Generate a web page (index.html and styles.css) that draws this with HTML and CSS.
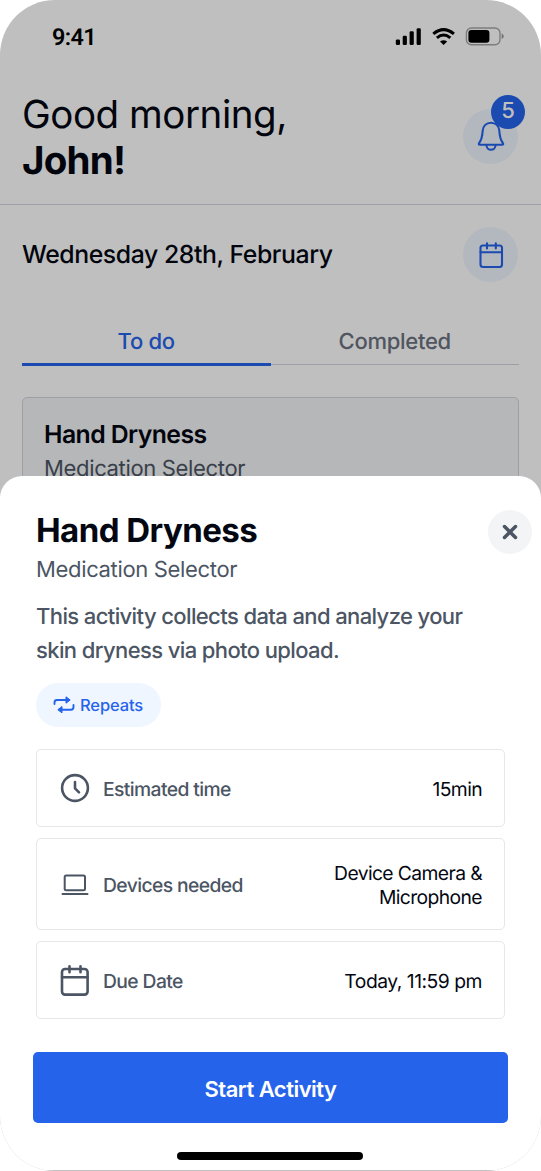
FILE: index.html
```html
<!DOCTYPE html>
<html lang="en">
<head>
<meta charset="utf-8">
<title>Hand Dryness</title>
<link rel="stylesheet" href="styles.css">
</head>
<body>
<div class="phone">
  <main class="screen">
    <div class="status">
      <span class="clock">9:41</span>
      <svg class="status-icons" width="110" height="20" viewBox="0 0 110 20">
        <rect x=".8" y="12.4" width="4.200" height="5.600" rx="1.3"/>
        <rect x="7.700" y="8.800" width="4.200" height="9.200" rx="1.3"/>
        <rect x="14.600" y="4.200" width="4.200" height="13.800" rx="1.3"/>
        <rect x="21.600" y="1.300" width="4.200" height="16.700" rx="1.3"/>
        <path d="M38.300 6.900Q48.600 -1.500 58.900 6.900" fill="none" stroke="#000" stroke-width="3.100"/>
        <path d="M41.900 10.900Q48.600 5.200 55.300 10.900" fill="none" stroke="#000" stroke-width="3"/>
        <path d="M45 14.600Q48.600 11.900 52.200 14.600L48.600 18Z"/>
        <rect x="71.400" y="1" width="33.600" height="16.700" rx="5" fill="none" stroke="#000" stroke-opacity=".35" stroke-width="1.4"/>
        <rect x="73.400" y="3" width="21" height="12.700" rx="3"/>
        <path d="M106.700 6.600Q108.700 7.400 108.700 9.300T106.700 12Z" fill-opacity=".4"/>
      </svg>
    </div>
    <header class="header">
      <h1 class="greeting">Good morning,<br><b>John!</b></h1>
      <div class="round">
        <svg width="30" height="32" viewBox="0 0 30 32" class="line"><path d="M15 2.700C19.800 2.700 22.800 6.200 23.300 10.600C23.700 17 24.500 20 26.800 23Q28 24.700 26 24.700H4Q2 24.700 3.200 23C5.500 20 6.300 17 6.700 10.600C7.200 6.200 10.200 2.700 15 2.700ZM10.500 25.200A4.500 4.600 0 0 0 19.500 25.200"/></svg>
        <span class="badge">5</span>
      </div>
    </header>
    <div class="date-row">
      <span class="date">Wednesday 28th, February</span>
      <div class="round">
        <svg width="30" height="30" viewBox="0 0 30 30" class="line"><rect x="4.500" y="5.500" width="21.500" height="21.500" rx="2.500"/><path d="M4.500 12.300H26M11 3.200V8.500M19.800 3.200V8.500"/></svg>
      </div>
    </div>
    <nav class="tabs">
      <span class="tab active">To do</span>
      <span class="tab">Completed</span>
    </nav>
    <section class="card">
      <h2 class="card-title">Hand Dryness</h2>
      <p class="card-sub">Medication Selector</p>
    </section>
  </main>
  <div class="scrim"></div>
  <section class="sheet">
    <div class="sheet-head">
      <div>
        <h2 class="title">Hand Dryness</h2>
        <p class="subtitle">Medication Selector</p>
      </div>
      <button class="close" aria-label="Close"><svg width="16" height="16" viewBox="0 0 16 16"><path d="M2.500 2.500L13.500 13.500M13.500 2.500L2.500 13.500"/></svg></button>
    </div>
    <p class="desc">This activity collects data and analyze your<br>skin dryness via photo upload.</p>
    <span class="pill">
      <svg width="22" height="20" viewBox="0 0 22 20"><path d="M1.500 9V7.500Q1.500 5 4 5H14M20.500 10V12Q20.500 14.700 18 14.700H8" fill="none" stroke="#2563eb" stroke-width="1.900" stroke-linecap="round"/><path d="M13 1.800L17.200 5L13 8.200ZM9 11.500L4.800 14.700L9 17.900Z" fill="#2563eb" stroke="#2563eb" stroke-linejoin="round"/></svg>
      Repeats
    </span>
    <div class="rows">
      <div class="row">
        <svg width="32" height="32" viewBox="0 0 32 32"><circle cx="16" cy="15" r="12.900"/><path d="M16 9V15.300L20 19.400"/></svg>
        <span class="label">Estimated time</span><span class="value">15min</span>
      </div>
      <div class="row tall">
        <svg width="32" height="32" viewBox="0 0 32 32" class="thin"><rect x="5.700" y="6.500" width="20.300" height="14.700" rx="1.500"/><path d="M3.500 24.900H28.500"/></svg>
        <span class="label">Devices needed</span><span class="value">Device Camera &amp;<br>Microphone</span>
      </div>
      <div class="row">
        <svg width="32" height="32" viewBox="0 0 32 32"><rect x="3" y="4" width="25.600" height="25.600" rx="3"/><path d="M3 12.200H28.600M10.500 1.300V7.300M21.500 1.300V7.300"/></svg>
        <span class="label">Due Date</span><span class="value date-value">Today, 11:59 pm</span>
      </div>
    </div>
    <button class="start">Start Activity</button>
    <div class="home"></div>
  </section>
</div>
</body>
</html>
```
FILE: styles.css
```css
* { box-sizing: border-box; }
body { margin: 0; background: #fff; font-family: Inter, "Liberation Sans", sans-serif; color: #030712; text-rendering: geometricPrecision; }
h1, h2, p { margin: 0; font-weight: 400; }
button { border: 0; padding: 0; font: inherit; }
svg { display: block; flex: none; }

.phone { position: relative; width: 541px; height: 1171px; overflow: hidden; border-radius: 55px; background: #fff; }
.status { display: flex; justify-content: space-between; align-items: center; height: 73px; padding: 0 36px 0 52px; }
.clock { font: 600 23.400px/28px Roboto, sans-serif; letter-spacing: -.6px; color: #000; }
.header { display: flex; justify-content: space-between; align-items: center; height: 132px; padding: 0 23px 2px 22px; border-bottom: 1.500px solid #d1d5db; }
.greeting { padding-top: 1px; font-size: 38.500px; line-height: 46px; letter-spacing: -.45px; }
.greeting b { font-weight: 700; letter-spacing: -.75px; }
.round { position: relative; display: flex; align-items: center; justify-content: center; width: 55px; height: 55px; border-radius: 50%; background: #eff6ff; }
.header .round { margin-bottom: 3px; }
.line { fill: none; stroke: #2563eb; stroke-width: 2.100; stroke-linecap: round; stroke-linejoin: round; }
.badge { position: absolute; left: 28px; top: -14px; width: 34px; height: 34px; border-radius: 50%; background: #2563eb; color: #fff; font-size: 22px; line-height: 33px; font-weight: 500; text-align: center; }
.date-row { display: flex; justify-content: space-between; align-items: center; padding: 22px 23px 0 22px; }
.date { padding-bottom: 2px; font-size: 24.800px; font-weight: 500; letter-spacing: -.43px; }
.tabs { display: flex; margin: 36px 22px 0; border-bottom: 1.500px solid #d1d5db; }
.tab { flex: 1; height: 48px; line-height: 48px; text-align: center; font-size: 22px; letter-spacing: -.28px; font-weight: 500; color: #6b7280; margin-bottom: -2px; }
.tab.active { color: #2563eb; border-bottom: 3px solid #2563eb; }
.card { margin: 32px 22px 0; height: 140px; padding: 19px 21px; border: 1.500px solid #d1d5db; border-radius: 5px; background: #f3f4f6; }
.card-title { font-size: 24.800px; line-height: 34px; font-weight: 600; letter-spacing: -.58px; }
.card-sub { font-size: 22px; line-height: 36px; letter-spacing: -.34px; color: #4b5563; }
.scrim { position: absolute; inset: 0; background: rgba(0, 0, 0, .25); }

.sheet { position: absolute; left: 0; right: 0; top: 476px; height: 694px; padding: 34px 36px 0; border-radius: 22px 22px 0 0; background: #fff; display: flex; flex-direction: column; align-items: flex-start; }
.sheet-head { display: flex; justify-content: space-between; align-items: flex-start; width: 496px; }
.title { font-size: 33px; line-height: 40px; font-weight: 700; letter-spacing: -.55px; }
.subtitle { font-size: 22px; line-height: 40px; letter-spacing: -.34px; color: #4b5563; }
.close { display: flex; align-items: center; justify-content: center; width: 44px; height: 44px; border-radius: 50%; background: #f3f4f6; }
.close path { fill: none; stroke: #4b5563; stroke-width: 3.500; stroke-linecap: round; }
.desc { margin-top: 10px; font-size: 22px; line-height: 34px; font-weight: 500; letter-spacing: -.61px; color: #4b5563; white-space: nowrap; }
.pill { display: flex; align-items: center; gap: 5px; margin-top: 15px; width: 125px; height: 44px; padding-left: 17px; border-radius: 22px; background: #eff6ff; color: #2563eb; font-size: 16.500px; font-weight: 500; letter-spacing: -.14px; }
.rows { display: flex; flex-direction: column; gap: 11px; width: 469px; margin-top: 22px; }
.row { display: flex; align-items: center; height: 78px; padding: 2px 22px 0 22px; border: 1.500px solid #e5e7eb; border-radius: 5px; font-size: 19.300px; line-height: 24px; letter-spacing: -.6px; }
.row.tall { height: 92px; }
.row svg { fill: none; stroke: #4b5563; stroke-width: 2.600; stroke-linecap: round; stroke-linejoin: round; }
.row .thin { stroke-width: 2; }
.label { margin-left: 12px; font-weight: 500; color: #4b5563; }
.value { margin-left: auto; text-align: right; }
.date-value { letter-spacing: -.48px; }
.start { align-self: center; width: 475px; height: 71px; margin-top: 33px; border-radius: 5px; background: #2563eb; color: #fff; font-size: 22px; line-height: 28px; padding-top: 2px; font-weight: 600; letter-spacing: -.52px; }
.home { align-self: center; width: 186px; height: 8px; margin: 29px 1px 0 0; border-radius: 4px; background: #000; }
```
